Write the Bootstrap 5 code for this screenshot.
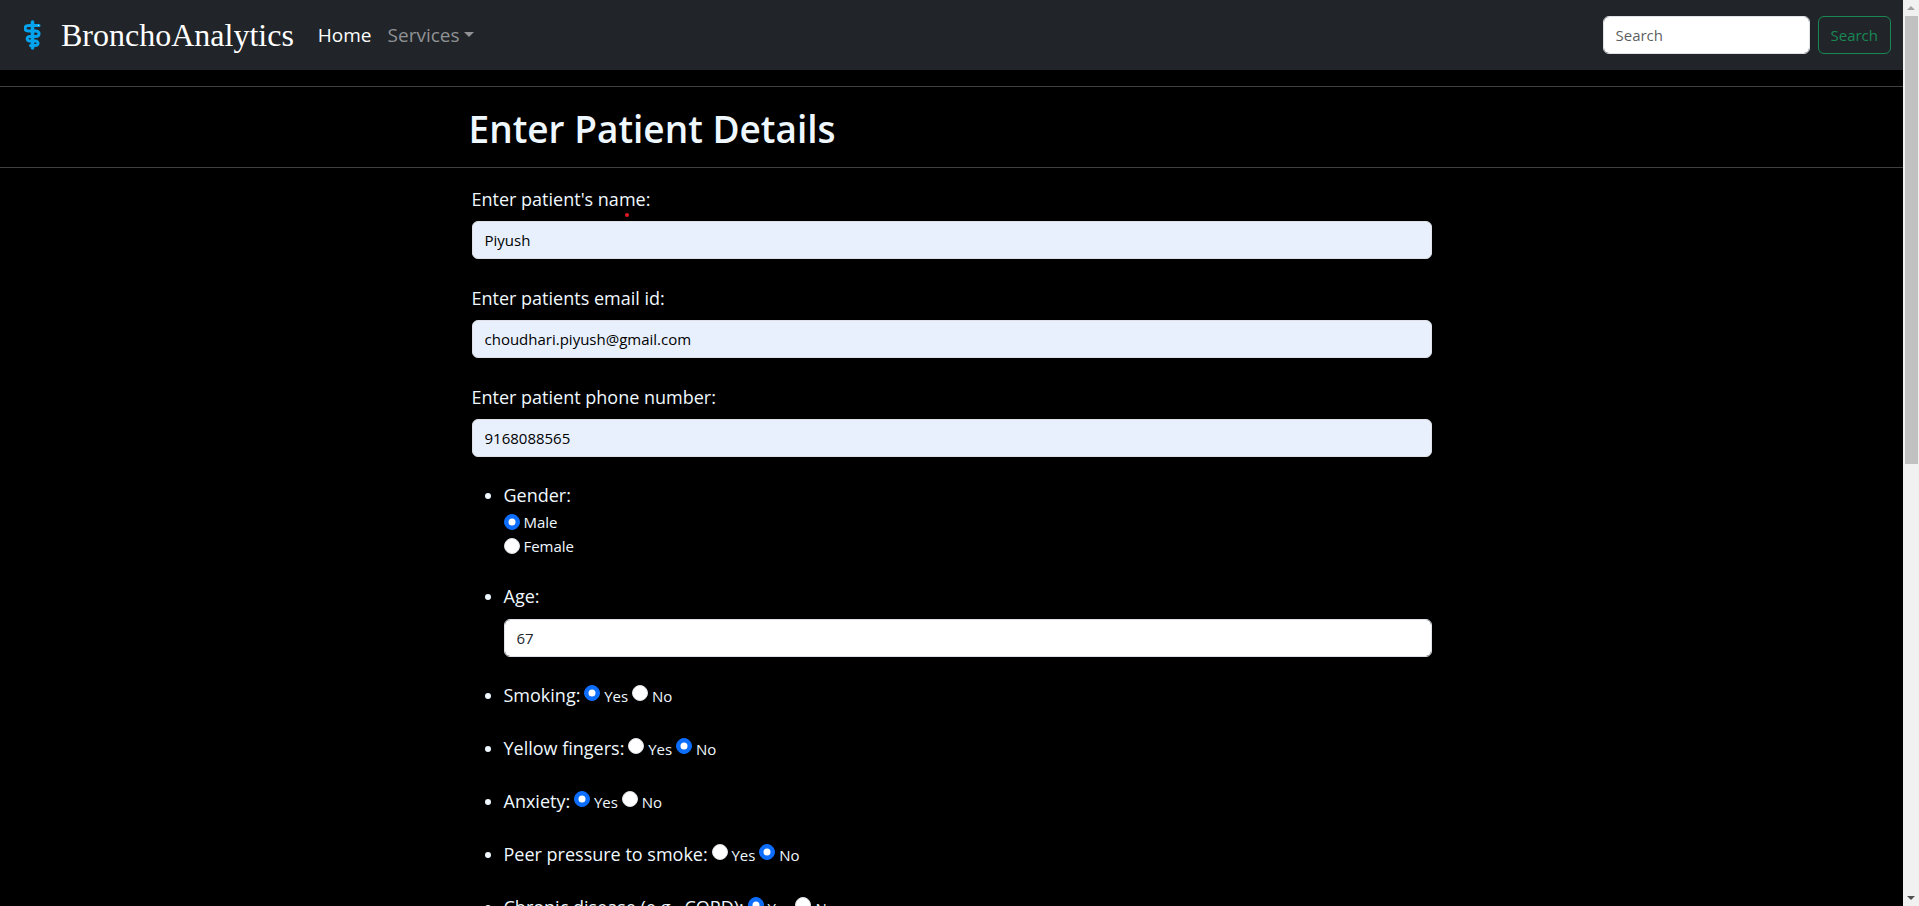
<!DOCTYPE html>
<html lang="en">
<head>
<meta charset="utf-8">
<meta name="viewport" content="width=device-width, initial-scale=1">
<title>BronchoAnalytics</title>
<link href="https://cdn.jsdelivr.net/npm/bootstrap@5.3.0/dist/css/bootstrap.min.css" rel="stylesheet">
<style>
  body { background: #000; color: #f0f8ff; font-family: "Open Sans", "Noto Sans", sans-serif; font-size: 15px; line-height: 24px; }
  .site-nav { min-height: 70px; background: #212529; padding: 0 12px 0 24px; }
  .brand-link { gap: 20px; }
  .brand-name { font-family: "Liberation Serif", serif; font-size: 32px; line-height: 40px; color: #fff; }
  .site-nav .nav-link { font-size: 19px; line-height: 28px; padding: 8px; color: #909294; }
  .site-nav .nav-link.active { color: #fff; }
  .form-control { font-size: 15px; line-height: 24px; height: 38px; }
  .search-box { width: 207px; }
  .site-nav .btn { font-size: 15px; line-height: 24px; }
  .rule { border-color: #fff; }
  .title-row { max-width: 966px; }
  .patient-form { max-width: 960px; }
  .page-title { font-size: 37px; line-height: 44px; padding-top: 4px; font-weight: 600; }
  .field-label { font-size: 18px; line-height: 29px; }
  .text-field > .field-label { line-height: 27px; padding-top: 2px; }
  .name-dot { left: 153px; top: 29px; }
  .filled, .filled:focus { background: #e8f0fe; color: #000; }
  .question-list { padding-left: 32px; }
  .question-list > li { margin-bottom: 24px; }
  .question-list > li::marker { font-size: 18px; }
  .form-check-input { width: 16px; height: 16px; margin-top: 4px; }
  .inline-q { height: 29px; line-height: 29px; white-space: nowrap; }
  .scroll-track { width: 16px; background: #f1f1f1; }
  .scroll-thumb { width: 13px; height: 448px; background: #c1c1c1; }
</style>
</head>
<body>
<div class="d-flex vh-100 overflow-hidden">
  <div class="flex-grow-1 overflow-hidden">
    <nav class="site-nav d-flex align-items-center">
      <a href="#" class="brand-link d-flex align-items-center text-decoration-none me-3">
        <svg width="17" height="30" viewBox="0 0 17 30" fill="none" stroke="#04a3ee" stroke-linecap="round" aria-hidden="true">
          <path d="M8.500 2V28" stroke-width="3.600"/>
          <path d="M15 5.500H5C-.5 5.500 0 11 4.500 11H11.500C16.500 11 16 16.500 11.500 16.500H6C2 16.500 2.500 21 6 21H11.500C15 21 15 25.500 11 25.500H6.500" stroke-width="3"/>
          <circle cx="14.500" cy="5.300" r=".6" fill="#d8f3ff" stroke="none"/>
        </svg>
        <span class="brand-name">BronchoAnalytics</span>
      </a>
      <ul class="nav flex-nowrap">
        <li><a class="nav-link active" href="#">Home</a></li>
        <li><a class="nav-link dropdown-toggle" href="#">Services</a></li>
      </ul>
      <form class="d-flex gap-2 ms-auto" role="search">
        <input class="form-control search-box" type="search" placeholder="Search" aria-label="Search">
        <button class="btn btn-outline-success" type="button">Search</button>
      </form>
    </nav>
    <hr class="rule">
    <div class="title-row mx-auto"><h1 class="page-title mb-0">Enter Patient Details</h1></div>
    <hr class="rule">
    <form class="patient-form mx-auto">
      <div class="text-field mb-4">
        <label class="field-label d-block mb-2 position-relative" for="pname">Enter patient's name:<svg class="name-dot position-absolute" width="4" height="4" aria-hidden="true"><circle cx="2" cy="2" r="2" fill="#e01b24"/></svg></label>
        <input class="form-control filled" id="pname" type="text" value="Piyush">
      </div>
      <div class="text-field mb-4">
        <label class="field-label d-block mb-2" for="pmail">Enter patients email id:</label>
        <input class="form-control filled" id="pmail" type="email" value="choudhari.piyush@gmail.com">
      </div>
      <div class="text-field mb-4">
        <label class="field-label d-block mb-2" for="phone">Enter patient phone number:</label>
        <input class="form-control filled" id="phone" type="tel" value="9168088565">
      </div>
      <ul class="question-list mb-0">
        <li>
          <div class="field-label">Gender:</div>
          <div><input class="form-check-input" type="radio" name="gender" id="male" checked> <label for="male">Male</label></div>
          <div><input class="form-check-input" type="radio" name="gender" id="female"> <label for="female">Female</label></div>
        </li>
        <li>
          <label class="field-label d-block mb-2" for="age">Age:</label>
          <input class="form-control" id="age" type="number" value="67">
        </li>
        <li class="inline-q">
          <span class="field-label">Smoking:</span>
          <input class="form-check-input" type="radio" name="smoking" id="smoking-y" checked> <label for="smoking-y">Yes</label>
          <input class="form-check-input" type="radio" name="smoking" id="smoking-n"> <label for="smoking-n">No</label>
        </li>
        <li class="inline-q">
          <span class="field-label">Yellow fingers:</span>
          <input class="form-check-input" type="radio" name="fingers" id="fingers-y"> <label for="fingers-y">Yes</label>
          <input class="form-check-input" type="radio" name="fingers" id="fingers-n" checked> <label for="fingers-n">No</label>
        </li>
        <li class="inline-q">
          <span class="field-label">Anxiety:</span>
          <input class="form-check-input" type="radio" name="anxiety" id="anxiety-y" checked> <label for="anxiety-y">Yes</label>
          <input class="form-check-input" type="radio" name="anxiety" id="anxiety-n"> <label for="anxiety-n">No</label>
        </li>
        <li class="inline-q">
          <span class="field-label">Peer pressure to smoke:</span>
          <input class="form-check-input" type="radio" name="peer" id="peer-y"> <label for="peer-y">Yes</label>
          <input class="form-check-input" type="radio" name="peer" id="peer-n" checked> <label for="peer-n">No</label>
        </li>
        <li class="inline-q">
          <span class="field-label">Chronic disease (e.g., COPD):</span>
          <input class="form-check-input" type="radio" name="chronic" id="chronic-y" checked> <label for="chronic-y">Yes</label>
          <input class="form-check-input" type="radio" name="chronic" id="chronic-n"> <label for="chronic-n">No</label>
        </li>
      </ul>
    </form>
  </div>
  <div class="scroll-track d-flex flex-column align-items-center flex-shrink-0" aria-hidden="true">
    <svg width="16" height="16"><path d="M4 10L8 6L12 10Z" fill="#a3a3a3"/></svg>
    <div class="scroll-thumb"></div>
    <svg class="mt-auto" width="16" height="16"><path d="M4 6L8 10L12 6Z" fill="#505050"/></svg>
  </div>
</div>
<script src="https://cdn.jsdelivr.net/npm/bootstrap@5.3.0/dist/js/bootstrap.bundle.min.js"></script>
</body>
</html>
